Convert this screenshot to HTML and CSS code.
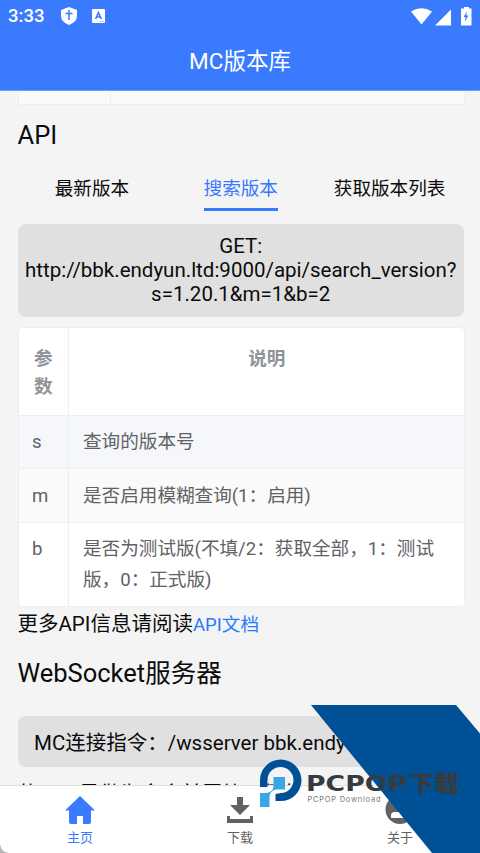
FILE: index.html
```html
<!DOCTYPE html>
<html lang="zh-CN">
<head>
<meta charset="utf-8">
<title>MC版本库</title>
<link rel="stylesheet" href="styles.css">
</head>
<body>
<div class="app">
  <header class="top">
    <div class="status">
      <span class="clock">3:33</span>
      <svg class="shield" viewBox="0 0 16 18"><path d="M8 0 16 3V9Q16 15 8 18Q0 15 0 9V3Z" fill="#fff"/><path d="M8 3V13M4.5 6.500H11.5" stroke="#397aff" stroke-width="1.5"/></svg>
      <svg class="input-mode" viewBox="0 0 13 14"><rect width="13" height="14" rx="1" fill="#fff"/><path d="M3.6 10 6.4 3.7 9.4 10M4.6 8H8.4" stroke="#397aff" stroke-width="1.6" fill="none"/><path d="M7 12.500H12" stroke="#b2cbff"/></svg>
      <span class="spacer"></span>
      <svg class="signals" viewBox="0 0 62 19"><path d="M1 4.500Q11.500-2 22 4.500L11.500 17.500Z" fill="#fff"/><path d="M25 18.500 41 2.500V18.500Z" fill="#fff"/><path d="M54 1.500V0h5v1.500h2.500V18.500h-10.500V1.500Z" fill="#fff"/><path d="M57 4.500 53.500 10h2.200l-1 5 3.800-6.500h-2.200Z" fill="#397aff"/></svg>
    </div>
    <h1 class="title">MC版本库</h1>
  </header>
  <main class="content">
    <div class="previous"><span></span><span></span></div>
    <h2 class="heading api-heading">API</h2>
    <nav class="tabs"><span>最新版本</span><span class="active">搜索版本</span><span>获取版本列表</span></nav>
    <div class="endpoint">GET:<br>http://bbk.endyun.ltd:9000/api/search_version?<br>s=1.20.1&amp;m=1&amp;b=2</div>
    <div class="table">
      <div class="row head"><div class="cell">参数</div><div class="cell">说明</div></div>
      <div class="row tint"><div class="cell">s</div><div class="cell">查询的版本号</div></div>
      <div class="row pale"><div class="cell">m</div><div class="cell">是否启用模糊查询(1：启用)</div></div>
      <div class="row last"><div class="cell">b</div><div class="cell">是否为测试版(不填/2：获取全部，1：测试<br>版，0：正式版)</div></div>
    </div>
    <p class="more">更多API信息请阅读<a>API文档</a></p>
    <h2 class="heading socket-heading">WebSocket服务器</h2>
    <div class="command">MC连接指令：/wsserver bbk.endyun.ltd</div>
    <p class="usage">使用，是做为命令前置符，例如</p>
  </main>
  <nav class="bottom">
    <div class="item selected"><svg viewBox="0 0 30 28"><path d="M15 0 30 14.500H26V26Q26 28 24 28H18V20H12V28H6Q4 28 4 26V14.500H0Z" fill="currentColor"/></svg><span>主页</span></div>
    <div class="item"><svg viewBox="0 0 30 28"><path d="M12 1h6v8h7L15 19 5 9h7ZM2 20h3v3h20v-3h3v7H2Z" fill="#606266"/></svg><span>下载</span></div>
    <div class="item"><svg viewBox="0 0 30 28"><circle cx="15" cy="13.500" r="14.500" fill="#606266"/><circle cx="15" cy="9" r="5" fill="#fff"/><path d="M6 22v-3q0-3 4-3h10q4 0 4 3v3Z" fill="#fff"/></svg><span>关于</span></div>
  </nav>
  <svg class="watermark" viewBox="250 700 230 153">
    <path d="M311 705H456L480 733.500V853H432Z" fill="#005095"/>
    <path d="M260 787V780A20.750 20.750 0 1 1 280.750 801H275.500V794L281 793A13 13 0 1 0 267.500 780V787Z" fill="#005095"/>
    <path d="M273.500 777H285V789.500H276Q269.500 791 269.500 797V807H260V793H266Q273.500 792 273.500 786Z" fill="#39a7e5"/>
    <text class="brand" x="306" y="791" textLength="101" lengthAdjust="spacingAndGlyphs">PCPOP</text>
    <text class="brand-cn" x="409" y="790.500" textLength="50" lengthAdjust="spacingAndGlyphs">下载</text>
    <text class="brand-sub" x="307.500" y="801.500" textLength="73" lengthAdjust="spacing">PCPOP Download</text>
  </svg>
</div>
</body>
</html>
```
FILE: styles.css
```css
* { box-sizing: border-box; }
body { margin: 0; font-family: Roboto, "Noto Sans CJK SC", sans-serif; }
.app { position: relative; width: 480px; height: 853px; overflow: hidden; display: flex; flex-direction: column; background: #f4f4f4; color: #0b0b0b; }
.top { flex: 0 0 91px; background: #397aff; color: #fff; border-bottom: 1px solid #6d9cff; }
.status { display: flex; align-items: center; height: 32px; padding: 0 8px; }
.clock { width: 53px; font-size: 18.500px; font-weight: 500; line-height: 33px; }
.shield { width: 16px; height: 18px; }
.input-mode { width: 13px; height: 14px; margin-left: 15px; }
.spacer { flex: 1; }
.signals { width: 62px; height: 19px; }
.title { margin: 0; text-align: center; font-size: 22.500px; line-height: 58px; font-weight: 400; }
.content { flex: 1; min-height: 0; overflow: hidden; padding: 0 15px 0 17.500px; }
.previous { height: 14px; display: grid; grid-template-columns: 91px 1fr; border: 1px solid #ebeef5; border-top: 0; background: #fafafa; }
.previous span + span { border-left: 1px solid #ebeef5; }
.heading { margin: 0; font-weight: 400; font-size: 25.500px; line-height: 36px; }
.api-heading { margin-top: 12px; }
.tabs { display: grid; grid-template-columns: repeat(3, 1fr); justify-items: center; margin: 18px 1px 0 0; font-size: 18.600px; line-height: 37px; }
.tabs span { height: 40px; white-space: nowrap; }
.tabs .active { color: #397aff; border-bottom: 3px solid #397aff; }
.endpoint { margin: 13px 1px 0 0; height: 92.500px; border-radius: 8px; background: #e0e0e0; padding-top: 10px; text-align: center; font-size: 20.500px; line-height: 24px; white-space: nowrap; }
.table { margin-top: 10px; border: 1px solid #ebeef5; border-radius: 4px; overflow: hidden; font-size: 18.600px; line-height: 31px; color: #606266; background: #fff; }
.row { display: grid; grid-template-columns: 49.500px 1fr; height: 53.500px; border-bottom: 1px solid #ebeef5; }
.cell { padding: 11px 13.500px; white-space: nowrap; }
.cell + .cell { padding-left: 14px; border-left: 1px solid #ebeef5; }
.head { height: 88px; color: #909399; font-weight: 700; text-align: center; line-height: 28px; }
.head .cell { padding-top: 17px; white-space: normal; }
.tint { background: #f5f7fa; }
.pale { background: #fafafa; }
.pale .cell { padding-top: 11.500px; }
.last { height: 83px; border-bottom: 0; }
.more { margin: 2px 0 0; font-size: 20.500px; line-height: 30px; white-space: nowrap; }
.more a { color: #2979ff; font-size: 18.600px; }
.socket-heading { margin-top: 15.500px; }
.command { margin: 25px 1px 0 0; height: 51px; border-radius: 8px; background: #e0e0e0; padding-left: 16.500px; font-size: 20.500px; line-height: 54px; white-space: nowrap; }
.usage { margin: 11px 0 0; font-size: 20.500px; line-height: 32px; white-space: nowrap; }
.bottom { flex: 0 0 68px; display: grid; grid-template-columns: repeat(3, 1fr); border-top: 1px solid #dedede; background: radial-gradient(circle at 100% 0, #fff 7px, #b5b5b5 8px) 0 100% / 8px 8px no-repeat, #fff; }
.item { display: flex; flex-direction: column; align-items: center; padding-top: 10px; color: #606266; font-size: 13px; line-height: 18px; }
.item svg { width: 30px; height: 28px; overflow: visible; }
.item span { margin-top: 5px; }
.selected { color: #397aff; }
.watermark { position: absolute; left: 250px; top: 700px; width: 230px; height: 153px; }
.brand { fill: #383b3e; font-weight: 700; font-size: 21.500px; font-family: "DejaVu Sans", sans-serif; }
.brand-cn { fill: #383b3e; font-weight: 900; font-size: 22px; font-family: "Noto Sans CJK SC", sans-serif; }
.brand-sub { fill: #77797c; font-size: 7.500px; font-family: Inter, sans-serif; }
```
